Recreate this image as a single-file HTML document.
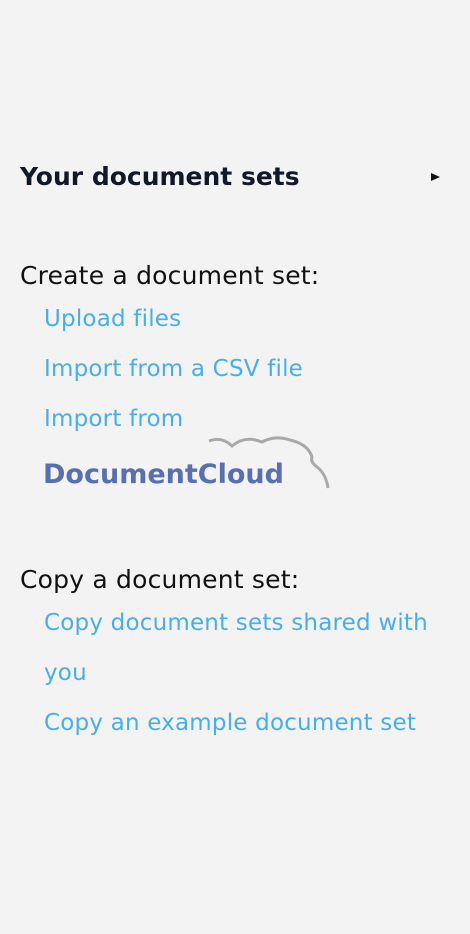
<!DOCTYPE html>
<html><head><style>
html,body{margin:0;padding:0;background:#f3f3f3;width:470px;height:934px;overflow:hidden}
body{position:relative;font-family:"DejaVu Sans","Liberation Sans",sans-serif}
.t{position:absolute;white-space:nowrap;line-height:1}
.h{left:20px;top:164px;font-size:25px;font-weight:bold;color:#111827;letter-spacing:0px}
.s{left:20px;font-size:25px;color:#111;letter-spacing:0.2px}
.l{left:44px;font-size:23px;color:#4aaee6;letter-spacing:0.2px}
</style></head><body>
<div class="t h">Your document sets</div>
<svg style="position:absolute;left:431px;top:173px" width="10" height="10"><polygon points="0,0 9,4 0,8" fill="#111"/></svg>
<div class="t s" style="top:263px">Create a document set:</div>
<div class="t l" style="top:308px">Upload files</div>
<div class="t l" style="top:358px">Import from a CSV file</div>
<div class="t l" style="top:408px">Import from</div>
<svg style="position:absolute;left:200px;top:432px" width="140" height="60">
<path d="M9,9 Q22,4 32,14 Q45,3 62,10 Q75,3 90,8 Q108,12 112,25 Q110,30 117,35 Q126,42 128,56" fill="none" stroke="#a9a9a9" stroke-width="3"/>
</svg>
<div class="t" style="left:43px;top:461px;font-size:27px;font-weight:bold;color:#5a6fae">DocumentCloud</div>
<div class="t s" style="top:567px">Copy a document set:</div>
<div class="t l" style="top:612px">Copy document sets shared with</div>
<div class="t l" style="top:662px">you</div>
<div class="t l" style="top:712px">Copy an example document set</div>
</body></html>
